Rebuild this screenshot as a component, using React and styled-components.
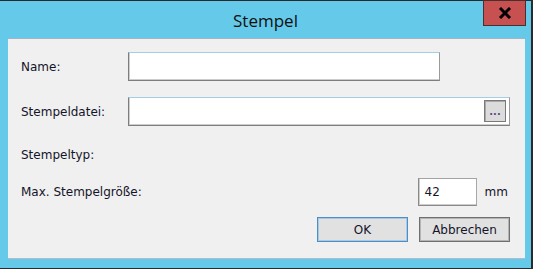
import styled, { createGlobalStyle } from "styled-components";

const GlobalStyle = createGlobalStyle`
  html, body {
    margin: 0;
    padding: 0;
    background: #ffffff;
  }

  body {
    font-family: "DejaVu Sans", "Liberation Sans", sans-serif;
    font-size: 12px;
    color: #111;
  }
`;

const Window = styled.div`
  position: relative;
  width: 531px;
  height: 267px;
  background: #65c9ea;
  border-top: 1px solid #2b2b2b;
  border-right: 2px solid #2b2b2b;
  border-bottom: 1px solid #2b2b2b;

  display: flex;
  flex-direction: column;
`;

const TitleBar = styled.header`
  height: 37px;
  box-sizing: border-box;
  padding-top: 8px;

  display: flex;
  justify-content: center;
  align-items: flex-start;
`;

const Title = styled.h1`
  margin: 0;
  font-family: "Open Sans", "Noto Sans", sans-serif;
  font-size: 17px;
  font-weight: 400;
  line-height: 23px;
  color: #101010;
`;

const CloseButton = styled.button`
  position: absolute;
  top: -1px;
  right: 5px;
  width: 43px;
  height: 26px;
  padding: 0;
  background: #c75050;
  border: 1px solid #4a2f2f;

  display: flex;
  align-items: center;
  justify-content: center;
`;

const Client = styled.main`
  margin-left: 8px;
  width: 517px;
  height: 221px;
  box-sizing: border-box;
  padding: 13px 15px 0 13px;
  background: #f0f0f0;
  border-top: 1px solid #9fb4c4;
  border-bottom: 1px solid #b3bcc6;

  display: flex;
  flex-direction: column;
`;

const Row = styled.div`
  height: ${(p) => p.$height}px;
  margin-top: ${(p) => p.$top || 0}px;

  display: flex;
  align-items: center;
  justify-content: ${(p) => (p.$end ? "flex-end" : "flex-start")};
  gap: ${(p) => p.$gap || 0}px;
`;

const Label = styled.label`
  width: 107px;
  flex-shrink: 0;
  white-space: nowrap;
  color: #14142a;
`;

const TextBox = styled.div`
  width: ${(p) => p.$width}px;
  height: 100%;
  box-sizing: border-box;
  background: #ffffff;
  border: 1px solid;
  border-color: ${(p) =>
    p.$plain ? "#a3a3a3 #a8a8a8 #8a8a8a #8a8a8a" : "#a6cde6 #9a9a9a #7e7e7e #7e7e7e"};
  box-shadow: inset 1px -1px 0 #cdcdcd;
  padding: 0 3px 0 6px;
  color: #14142a;

  display: flex;
  align-items: center;
  justify-content: space-between;
`;

const BrowseButton = styled.button`
  width: 22px;
  height: 22px;
  margin-bottom: 1px;
  padding: 0 0 4px;
  background: #dcdcdc;
  border: 1px solid #7a7a7a;
  box-shadow: inset 1px 1px 0 #a9a9a9;
  font-family: "DejaVu Sans", sans-serif;
  font-size: 10px;
  font-weight: 700;
  line-height: 1;
  color: #5c4c86;

  display: flex;
  align-items: flex-end;
  justify-content: center;
`;

const ValueGroup = styled.div`
  margin-left: auto;
  height: 100%;

  display: flex;
  align-items: center;
  gap: 8px;
`;

const Unit = styled.span`
  padding-right: 2px;
  color: #14142a;
`;

const DialogButton = styled.button`
  width: 91px;
  height: 100%;
  padding: 0;
  background: #e1e1e1;
  border: 1px solid ${(p) => (p.$default ? "#4d8fc4" : "#6f6f6f")};
  box-shadow: inset 0 0 0 1px ${(p) => (p.$default ? "#a9c9e4" : "#b4b4b4")};
  font-family: "DejaVu Sans", sans-serif;
  font-size: 12px;
  color: #14142a;
`;

const App = () => {
  return (
    <>
      <GlobalStyle />
      <Window>
        <TitleBar>
          <Title>Stempel</Title>
          <CloseButton aria-label="Schließen">
            <svg width="14" height="12" viewBox="0 0 14 12">
              <path d="M2 1 L12 11 M12 1 L2 11" stroke="#000" strokeWidth="3" />
            </svg>
          </CloseButton>
        </TitleBar>
        <Client>
          <Row $height={29}>
            <Label>Name:</Label>
            <TextBox $width={312} />
          </Row>
          <Row $height={29} $top={16}>
            <Label>Stempeldatei:</Label>
            <TextBox $width={383}>
              <span />
              <BrowseButton>...</BrowseButton>
            </TextBox>
          </Row>
          <Row $height={20} $top={19}>
            <Label>Stempeltyp:</Label>
          </Row>
          <Row $height={28} $top={13}>
            <Label>Max. Stempelgröße:</Label>
            <ValueGroup>
              <TextBox $width={59} $plain>
                42
              </TextBox>
              <Unit>mm</Unit>
            </ValueGroup>
          </Row>
          <Row $height={25} $top={11} $end $gap={11}>
            <DialogButton $default>OK</DialogButton>
            <DialogButton>Abbrechen</DialogButton>
          </Row>
        </Client>
      </Window>
    </>
  );
};

export default App;
